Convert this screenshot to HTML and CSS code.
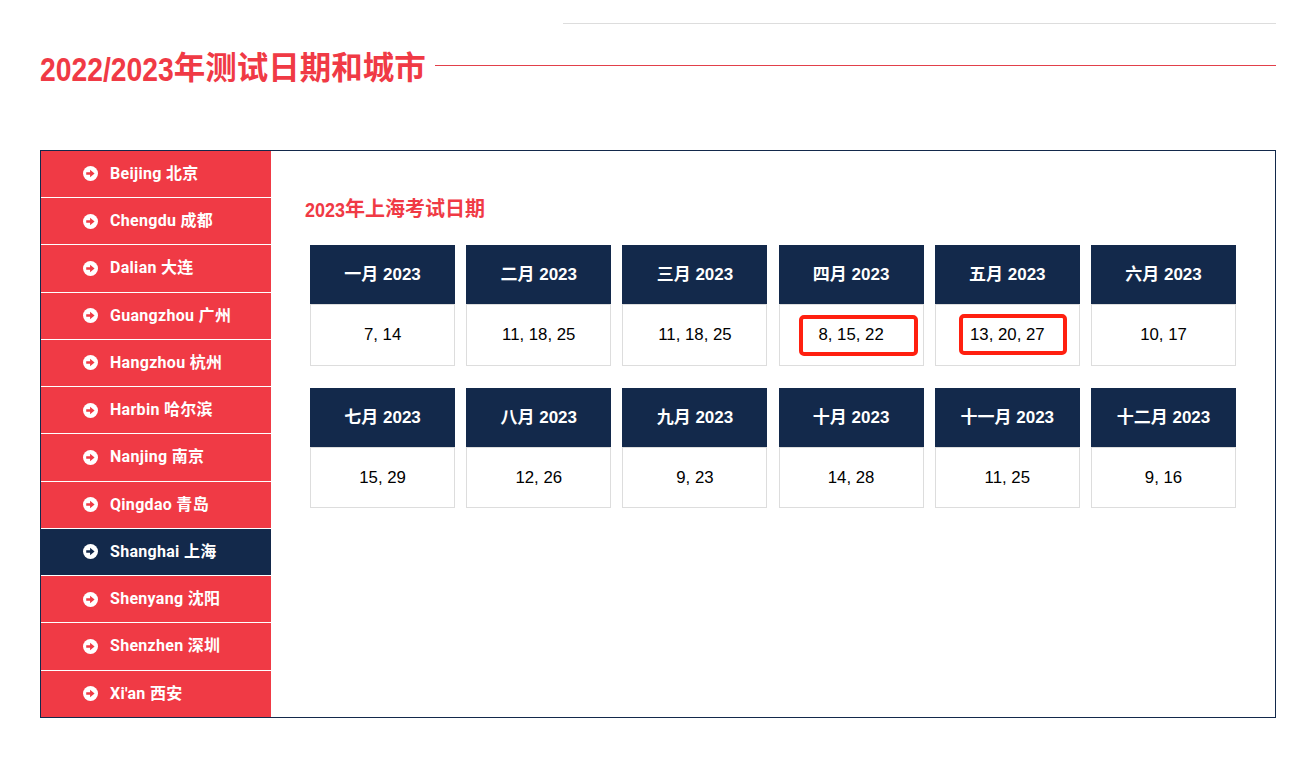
FILE: index.html
```html
<!DOCTYPE html>
<html lang="zh-CN">
<head>
	<meta charset="UTF-8">
	<title>2022/2023年测试日期和城市</title>
	<link rel="stylesheet" href="styles.css">
</head>
<body>
	<div class="topRule"></div>
	<div class="pageTitle">
		<h1><span class="num">2022/2023</span>年测试日期和城市</h1>
		<span class="titleRule"></span>
	</div>
	<div class="dateBox">
		<!-- City list -->
		<ul class="cityList">
			<li><svg class="arrow" viewBox="0 0 14 14"><circle cx="7" cy="7" r="7" fill="currentColor"/><path class="arrowHead" d="M3 5.8h3.6V3.6L10.8 7 6.6 10.4V8.2H3z"/></svg>Beijing 北京</li>
			<li><svg class="arrow" viewBox="0 0 14 14"><circle cx="7" cy="7" r="7" fill="currentColor"/><path class="arrowHead" d="M3 5.8h3.6V3.6L10.8 7 6.6 10.4V8.2H3z"/></svg>Chengdu 成都</li>
			<li><svg class="arrow" viewBox="0 0 14 14"><circle cx="7" cy="7" r="7" fill="currentColor"/><path class="arrowHead" d="M3 5.8h3.6V3.6L10.8 7 6.6 10.4V8.2H3z"/></svg>Dalian 大连</li>
			<li><svg class="arrow" viewBox="0 0 14 14"><circle cx="7" cy="7" r="7" fill="currentColor"/><path class="arrowHead" d="M3 5.8h3.6V3.6L10.8 7 6.6 10.4V8.2H3z"/></svg>Guangzhou 广州</li>
			<li><svg class="arrow" viewBox="0 0 14 14"><circle cx="7" cy="7" r="7" fill="currentColor"/><path class="arrowHead" d="M3 5.8h3.6V3.6L10.8 7 6.6 10.4V8.2H3z"/></svg>Hangzhou 杭州</li>
			<li><svg class="arrow" viewBox="0 0 14 14"><circle cx="7" cy="7" r="7" fill="currentColor"/><path class="arrowHead" d="M3 5.8h3.6V3.6L10.8 7 6.6 10.4V8.2H3z"/></svg>Harbin 哈尔滨</li>
			<li><svg class="arrow" viewBox="0 0 14 14"><circle cx="7" cy="7" r="7" fill="currentColor"/><path class="arrowHead" d="M3 5.8h3.6V3.6L10.8 7 6.6 10.4V8.2H3z"/></svg>Nanjing 南京</li>
			<li><svg class="arrow" viewBox="0 0 14 14"><circle cx="7" cy="7" r="7" fill="currentColor"/><path class="arrowHead" d="M3 5.8h3.6V3.6L10.8 7 6.6 10.4V8.2H3z"/></svg>Qingdao 青岛</li>
			<li class="active"><svg class="arrow" viewBox="0 0 14 14"><circle cx="7" cy="7" r="7" fill="currentColor"/><path class="arrowHead" d="M3 5.8h3.6V3.6L10.8 7 6.6 10.4V8.2H3z"/></svg>Shanghai 上海</li>
			<li><svg class="arrow" viewBox="0 0 14 14"><circle cx="7" cy="7" r="7" fill="currentColor"/><path class="arrowHead" d="M3 5.8h3.6V3.6L10.8 7 6.6 10.4V8.2H3z"/></svg>Shenyang 沈阳</li>
			<li><svg class="arrow" viewBox="0 0 14 14"><circle cx="7" cy="7" r="7" fill="currentColor"/><path class="arrowHead" d="M3 5.8h3.6V3.6L10.8 7 6.6 10.4V8.2H3z"/></svg>Shenzhen 深圳</li>
			<li><svg class="arrow" viewBox="0 0 14 14"><circle cx="7" cy="7" r="7" fill="currentColor"/><path class="arrowHead" d="M3 5.8h3.6V3.6L10.8 7 6.6 10.4V8.2H3z"/></svg>Xi'an 西安</li>
		</ul>
		<!-- Dates for the selected city -->
		<section class="dates">
			<h3><span class="num">2023</span>年上海考试日期</h3>
			<div class="monthGrid">
				<div class="month"><div class="monthName">一月 2023</div><div class="monthDays">7, 14</div></div>
				<div class="month"><div class="monthName">二月 2023</div><div class="monthDays">11, 18, 25</div></div>
				<div class="month"><div class="monthName">三月 2023</div><div class="monthDays">11, 18, 25</div></div>
				<div class="month"><div class="monthName">四月 2023</div><div class="monthDays">8, 15, 22<span class="mark markApril"></span></div></div>
				<div class="month"><div class="monthName">五月 2023</div><div class="monthDays">13, 20, 27<span class="mark markMay"></span></div></div>
				<div class="month"><div class="monthName">六月 2023</div><div class="monthDays">10, 17</div></div>
				<div class="month"><div class="monthName">七月 2023</div><div class="monthDays">15, 29</div></div>
				<div class="month"><div class="monthName">八月 2023</div><div class="monthDays">12, 26</div></div>
				<div class="month"><div class="monthName">九月 2023</div><div class="monthDays">9, 23</div></div>
				<div class="month"><div class="monthName">十月 2023</div><div class="monthDays">14, 28</div></div>
				<div class="month"><div class="monthName">十一月 2023</div><div class="monthDays">11, 25</div></div>
				<div class="month"><div class="monthName">十二月 2023</div><div class="monthDays">9, 16</div></div>
			</div>
		</section>
	</div>
</body>
</html>
```
FILE: styles.css
```css
body{
	margin: 0;
	padding: 23px 39px 0 40px;
	background-color: #fff;
	font-family: "Liberation Sans", "Noto Sans CJK SC", sans-serif;
}
.topRule{
	height: 1px;
	margin-left: 523px;
	background-color: #ddd;
}
.pageTitle{
	display: flex;
	align-items: center;
	gap: 9px;
	height: 82px;
	margin-bottom: 44px;
}
h1{
	margin: 6px 0 0;
	font-size: 31.5px;
	line-height: 36px;
	font-weight: bold;
	color: #f03a45;
	white-space: nowrap;
}
.num{
	display: inline-block;
	transform: scaleY(1.17);
}
h1 .num{
	font-size: 28.3px;
}
h3 .num{
	font-size: 18px;
}
.titleRule{
	flex: 1;
	height: 1px;
	background-color: #e2404a;
}
.dateBox{
	display: flex;
	height: 566px;
	border: 1px solid #13294b;
}
.cityList{
	display: flex;
	flex-direction: column;
	width: 230px;
	margin: -0.1px 0 0;
	padding: 0;
	list-style: none;
	background-color: #f03a45;
}
.cityList li{
	box-sizing: border-box;
	height: 47.25px;
	display: flex;
	align-items: center;
	padding: 0 0 0.4px 42px;
	border-bottom: 1px solid #fff;
	font-family: Roboto, "Noto Sans CJK SC", sans-serif;
	font-size: 16px;
	letter-spacing: 0.3px;
	line-height: 20px;
	font-weight: bold;
	color: #fff;
}
.cityList li:last-child{
	height: 46.35px;
	border-bottom: none;
}
.cityList li.active{
	background-color: #13294b;
}
.arrow{
	width: 15px;
	height: 15px;
	margin-right: 12px;
}
.arrowHead{
	fill: #f03a45;
}
.active .arrowHead{
	fill: #13294b;
}
.dates{
	flex: 1;
	padding: 44px 39px 0 34px;
}
h3{
	margin: 0 0 21.4px;
	font-size: 20px;
	line-height: 28px;
	font-weight: bold;
	color: #f03a45;
}
.monthGrid{
	display: grid;
	grid-template-columns: repeat(6, 145px);
	gap: 22px 11.2px;
	margin-left: 5.2px;
}
.monthName{
	height: 59px;
	line-height: 59px;
	text-align: center;
	font-size: 17px;
	font-weight: bold;
	color: #fff;
	background-color: #13294b;
}
.monthDays{
	position: relative;
	height: 59.4px;
	line-height: 60px;
	text-align: center;
	font-size: 16.8px;
	color: #000;
	border: 1px solid #ddd;
}
/* hand drawn marks over the two cells */
.mark{
	position: absolute;
	top: 10px;
	height: 41px;
	box-sizing: border-box;
	border: 4px solid #ff2010;
	border-radius: 5px;
}
.markApril{
	left: 19px;
	width: 119px;
}
.markMay{
	top: 9px;
	left: 23px;
	width: 108px;
}
```
